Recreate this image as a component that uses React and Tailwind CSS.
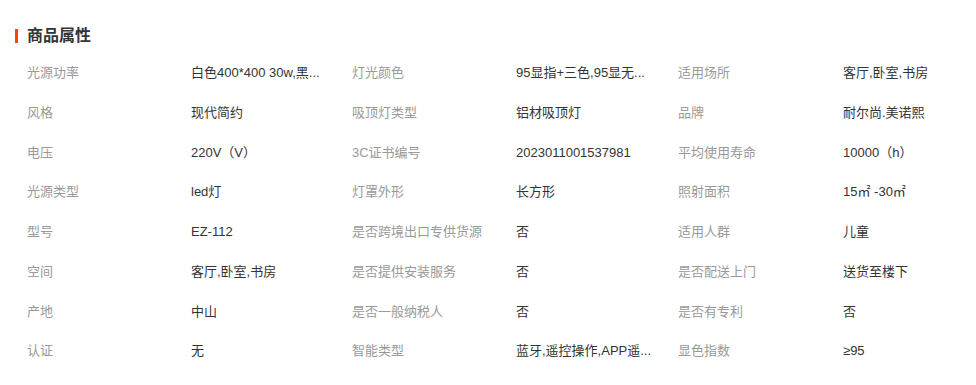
import React from "react";

const rows = [
  ["光源功率", "白色400*400 30w,黑...", "灯光颜色", "95显指+三色,95显无...", "适用场所", "客厅,卧室,书房"],
  ["风格", "现代简约", "吸顶灯类型", "铝材吸顶灯", "品牌", "耐尔尚.美诺熙"],
  ["电压", "220V（V）", "3C证书编号", "2023011001537981", "平均使用寿命", "10000（h）"],
  ["光源类型", "led灯", "灯罩外形", "长方形", "照射面积", "15㎡ -30㎡"],
  ["型号", "EZ-112", "是否跨境出口专供货源", "否", "适用人群", "儿童"],
  ["空间", "客厅,卧室,书房", "是否提供安装服务", "否", "是否配送上门", "送货至楼下"],
  ["产地", "中山", "是否一般纳税人", "否", "是否有专利", "否"],
  ["认证", "无", "智能类型", "蓝牙,遥控操作,APP遥...", "显色指数", "≥95"],
];

export default function App() {
  return (
    <div
      className="w-[976px] h-[385px] bg-white overflow-hidden"
      style={{ fontFamily: '"Liberation Sans", "Noto Sans CJK SC", sans-serif' }}
    >
      <div className="h-[53px] pt-[29px] pl-[15px]">
        <div className="flex items-center h-[14px]">
          <div className="w-[3px] h-[14px] bg-[#ff4400]" />
          <div className="ml-[9px] text-[16px] leading-[14px] font-bold text-[#333]">商品属性</div>
        </div>
      </div>
      <div className="pl-[27px]">
        {rows.map((r, i) => (
          <div
            key={i}
            className="grid grid-cols-[164px_161px_164px_162px_165px_1fr] h-[39.75px] items-center text-[13px] whitespace-nowrap"
          >
            <div className="text-[#999]">{r[0]}</div>
            <div className="text-[#333]">{r[1]}</div>
            <div className="text-[#999]">{r[2]}</div>
            <div className="text-[#333]">{r[3]}</div>
            <div className="text-[#999]">{r[4]}</div>
            <div className="text-[#333]">{r[5]}</div>
          </div>
        ))}
      </div>
    </div>
  );
}
